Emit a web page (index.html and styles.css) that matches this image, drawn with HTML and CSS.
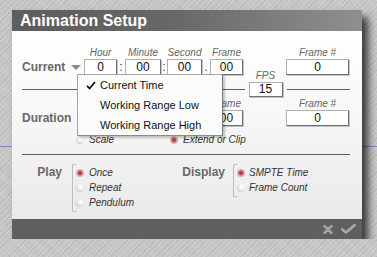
FILE: index.html
```html
<!DOCTYPE html>
<html>
<head>
<meta charset="utf-8">
<link rel="stylesheet" href="styles.css">
</head>
<body>
<div class="dialog">
  <div class="titlebar">Animation Setup</div>
  <div class="content">
    <div class="timegrid">
      <span class="fps"><span class="fps-label">FPS</span><span class="box fps-box">15</span></span>

      <span></span><span class="hdr">Hour</span><span></span><span class="hdr">Minute</span><span></span><span class="hdr">Second</span><span></span><span class="hdr">Frame</span><span></span><span class="hdr">Frame #</span>

      <span class="label">Current<i class="arrow"></i></span><span class="box">0</span><span class="sep">:</span><span class="box">00</span><span class="sep">:</span><span class="box">00</span><span class="sep">.</span><span class="box">00</span><span class="box">0</span>

      <span class="rule rule-left"></span><span class="rule rule-right"></span>

      <span></span><span class="hdr">Hour</span><span></span><span class="hdr">Minute</span><span></span><span class="hdr">Second</span><span></span><span class="hdr">Frame</span><span></span><span class="hdr">Frame #</span>

      <span class="label">Duration</span><span class="box">0</span><span class="sep">:</span><span class="box">00</span><span class="sep">:</span><span class="box">00</span><span class="sep">.</span><span class="box">00</span><span></span><span class="box">0</span>
    </div>

    <div class="radio-row">
      <span class="radio-item scale"><i class="radio"></i>Scale</span>
      <span class="radio-item"><i class="radio on"></i>Extend or Clip</span>
    </div>

    <div class="divider"></div>

    <div class="options">
      <div class="group group-play">
        <span class="group-label">Play</span>
        <div class="bracket">
          <span class="radio-item"><i class="radio on"></i>Once</span>
          <span class="radio-item"><i class="radio"></i>Repeat</span>
          <span class="radio-item"><i class="radio"></i>Pendulum</span>
        </div>
      </div>
      <div class="group group-display">
        <span class="group-label">Display</span>
        <div class="bracket">
          <span class="radio-item"><i class="radio on"></i>SMPTE Time</span>
          <span class="radio-item"><i class="radio"></i>Frame Count</span>
        </div>
      </div>
    </div>
  </div>
  <div class="footer">
    <svg class="icon-x" width="10" height="9" viewBox="0 0 10 9"><path d="M1.5 1 L8.5 8 M8.5 1 L1.5 8" stroke="#a3a3a3" stroke-width="2.6" stroke-linecap="round"/></svg>
    <svg class="icon-ok" width="15" height="10" viewBox="0 0 15 10"><path d="M1.5 5.5 L5 8.5 L13.5 1.2" fill="none" stroke="#a8a8a8" stroke-width="2.8" stroke-linecap="round" stroke-linejoin="round"/></svg>
  </div>

  <div class="menu">
    <div class="menu-item"><span class="check"><svg width="10" height="9" viewBox="0 0 10 9"><path d="M1 4.8 L3.6 7.5 L9 1" fill="none" stroke="#111" stroke-width="1.8"/></svg></span>Current Time</div>
    <div class="menu-item"><span class="check"></span>Working Range Low</div>
    <div class="menu-item"><span class="check"></span>Working Range High</div>
  </div>
</div>
</body>
</html>
```

FILE: styles.css
```css
html {
  background-color: #c6c6c6;
  background-image:
    linear-gradient(to bottom, transparent 146px, rgba(110,128,196,0.85) 146px, rgba(110,128,196,0.85) 147px, transparent 147px),
    repeating-linear-gradient(45deg, rgba(255,255,255,0.14) 0 1px, transparent 1px 3px),
    repeating-linear-gradient(-45deg, rgba(0,0,0,0.06) 0 1px, transparent 1px 4px);
  height: 100%;
}

body {
  margin: 0;
  font-family: "Liberation Sans", Arial, sans-serif;
}

.dialog {
  position: relative;
  width: 350px;
  margin: 10px 0 0 12px;
  box-shadow: 6px 7px 8px rgba(0,0,0,0.72);
}

.titlebar {
  height: 21px;
  line-height: 21px;
  padding-left: 8px;
  font-size: 16px;
  font-weight: bold;
  color: #fff;
  background: linear-gradient(to right, #5d5d5d 0%, #676767 45%, #8f8f8f 100%);
}

.content {
  height: 173px;
  padding: 15px 0 0 10px;
  background: linear-gradient(to bottom, #ffffff 0%, #f6f6f6 50%, #e9e9e9 100%);
}

.timegrid {
  display: grid;
  grid-template-columns: 62px 33px 8px 36px 6px 35px 8px 33px 43px 63px;
  grid-template-rows: 13px 16px 22px 13px 16px;
}

.hdr {
  font-size: 10px;
  font-style: italic;
  line-height: 13px;
  color: #666;
  text-align: center;
  white-space: nowrap;
}

.label {
  display: flex;
  align-items: center;
  font-size: 12px;
  font-weight: bold;
  line-height: 16px;
  color: #686868;
}

.arrow {
  display: block;
  margin-left: 6px;
  margin-top: 1px;
  width: 0;
  height: 0;
  border-left: 5px solid transparent;
  border-right: 5px solid transparent;
  border-top: 5px solid #8a8a8a;
}

.box {
  box-sizing: border-box;
  height: 16px;
  background: #fff;
  border: 1px solid;
  border-color: #b0b0b0 #707070 #707070 #b0b0b0;
  box-shadow: 1px 1px 0 rgba(0,0,0,0.22);
  font-size: 12px;
  line-height: 14px;
  text-align: center;
  color: #111;
}

.sep {
  font-size: 12px;
  line-height: 16px;
  text-align: center;
  color: #444;
}

.fps {
  grid-column: 9;
  grid-row: 2 / 4;
  align-self: end;
  justify-self: center;
  display: flex;
  flex-direction: column;
  align-items: center;
  margin-left: 2px;
}

.fps-label {
  font-size: 10px;
  font-style: italic;
  line-height: 11px;
  color: #666;
  margin-bottom: 1px;
}

.fps-box {
  width: 34px;
  height: 15px;
  line-height: 13px;
}

.rule {
  height: 1px;
  background: #5e5e5e;
  align-self: start;
  margin-top: 14px;
}

.rule-left {
  grid-column: 1 / span 8;
  margin-right: -2px;
}

.rule-right {
  grid-column: 10;
  margin-left: 1px;
  margin-right: -1px;
}

.radio-row {
  display: flex;
  margin-top: 8px;
  padding-left: 54px;
  height: 12px;
}

.radio-row .radio-item {
  height: 12px;
  line-height: 12px;
}

.radio-row .scale {
  width: 94px;
}

.radio-item {
  display: flex;
  align-items: center;
  height: 15px;
  line-height: 15px;
  font-size: 10px;
  font-style: italic;
  color: #333;
  white-space: nowrap;
}

.radio {
  display: block;
  width: 8px;
  height: 8px;
  border-radius: 50%;
  margin-right: 5px;
  background: radial-gradient(circle at 62% 35%, #ffffff 0%, #f4f4f4 35%, #d2d2d2 70%, #a9a9a9 100%);
}

.radio.on {
  background: radial-gradient(circle at 50% 50%, #b43a48 0%, #c04854 32%, #e2aab0 52%, #d9b4b7 75%, #a99a9b 100%);
}

.divider {
  height: 1px;
  width: 328px;
  margin-top: 8px;
  background: #5e5e5e;
}

.options {
  display: flex;
  margin-top: 9px;
}

.group {
  display: flex;
  align-items: flex-start;
}

.group-play {
  width: 153px;
}

.group-label {
  font-size: 12px;
  font-weight: bold;
  color: #686868;
  line-height: 15px;
  margin-top: 1px;
  text-align: right;
}

.group-play .group-label {
  width: 40px;
  margin-right: 10px;
}

.group-display .group-label {
  width: 50px;
  margin-right: 8px;
}

.bracket {
  position: relative;
  padding: 1px 0 2px 4px;
}

.bracket::before {
  content: "";
  position: absolute;
  left: 0;
  top: 0;
  bottom: 0;
  width: 3px;
  border: 1px solid #bdbdbd;
  border-right: none;
  border-radius: 2px 0 0 2px;
}

.group-display .radio {
  margin-right: 4px;
}

.footer {
  height: 20px;
  background: #5f5f5f;
  display: flex;
  justify-content: flex-end;
  align-items: center;
  padding-right: 6px;
  gap: 8px;
}

.icon-x {
  display: block;
  margin-top: 1px;
}

.icon-ok {
  display: block;
}

.menu {
  position: absolute;
  left: 65px;
  top: 64px;
  width: 144px;
  background: #fbfbfb;
  border: 1px solid #a4a4a4;
  border-right-color: #7a7a7a;
  border-bottom-color: #8a8a8a;
  box-shadow: 2px 2px 2px rgba(0,0,0,0.22);
  padding-bottom: 0;
}

.menu-item {
  display: flex;
  align-items: center;
  height: 20px;
  font-size: 11px;
  color: #111;
  white-space: nowrap;
}

.check {
  display: flex;
  align-items: center;
  width: 22px;
  padding-left: 8px;
  box-sizing: border-box;
  height: 20px;
}

.check svg {
  display: block;
}
```
